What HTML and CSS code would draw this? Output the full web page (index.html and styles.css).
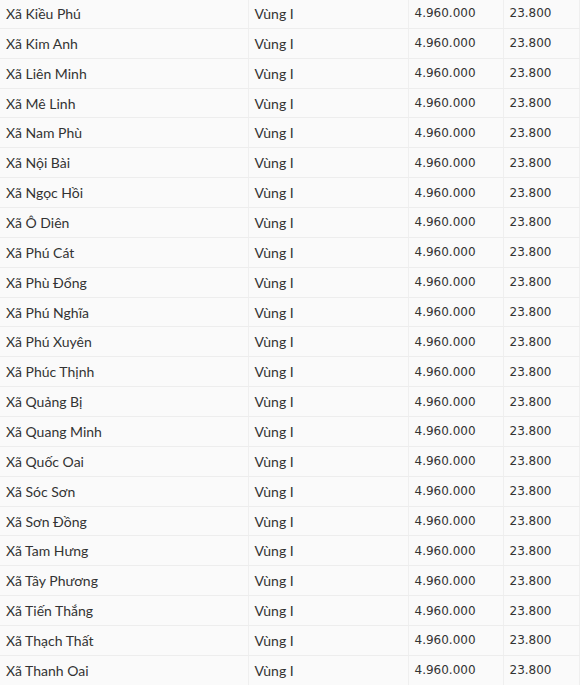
FILE: index.html
```html
<!DOCTYPE html>
<html lang="vi">
<head>
<meta charset="utf-8">
<link rel="stylesheet" href="styles.css">
</head>
<body>
<table class="rates">
<colgroup><col class="c-name"><col class="c-zone"><col class="c-month"><col class="c-hour"></colgroup>
<tbody>
<tr><td class="name">Xã Kiều Phú</td><td class="zone">Vùng I</td><td class="num">4.960.000</td><td class="num">23.800</td></tr>
<tr><td class="name">Xã Kim Anh</td><td class="zone">Vùng I</td><td class="num">4.960.000</td><td class="num">23.800</td></tr>
<tr><td class="name">Xã Liên Minh</td><td class="zone">Vùng I</td><td class="num">4.960.000</td><td class="num">23.800</td></tr>
<tr><td class="name">Xã Mê Linh</td><td class="zone">Vùng I</td><td class="num">4.960.000</td><td class="num">23.800</td></tr>
<tr><td class="name">Xã Nam Phù</td><td class="zone">Vùng I</td><td class="num">4.960.000</td><td class="num">23.800</td></tr>
<tr><td class="name">Xã Nội Bài</td><td class="zone">Vùng I</td><td class="num">4.960.000</td><td class="num">23.800</td></tr>
<tr><td class="name">Xã Ngọc Hồi</td><td class="zone">Vùng I</td><td class="num">4.960.000</td><td class="num">23.800</td></tr>
<tr><td class="name">Xã Ô Diên</td><td class="zone">Vùng I</td><td class="num">4.960.000</td><td class="num">23.800</td></tr>
<tr><td class="name">Xã Phú Cát</td><td class="zone">Vùng I</td><td class="num">4.960.000</td><td class="num">23.800</td></tr>
<tr><td class="name">Xã Phù Đổng</td><td class="zone">Vùng I</td><td class="num">4.960.000</td><td class="num">23.800</td></tr>
<tr><td class="name">Xã Phú Nghĩa</td><td class="zone">Vùng I</td><td class="num">4.960.000</td><td class="num">23.800</td></tr>
<tr><td class="name">Xã Phú Xuyên</td><td class="zone">Vùng I</td><td class="num">4.960.000</td><td class="num">23.800</td></tr>
<tr><td class="name">Xã Phúc Thịnh</td><td class="zone">Vùng I</td><td class="num">4.960.000</td><td class="num">23.800</td></tr>
<tr><td class="name">Xã Quảng Bị</td><td class="zone">Vùng I</td><td class="num">4.960.000</td><td class="num">23.800</td></tr>
<tr><td class="name">Xã Quang Minh</td><td class="zone">Vùng I</td><td class="num">4.960.000</td><td class="num">23.800</td></tr>
<tr><td class="name">Xã Quốc Oai</td><td class="zone">Vùng I</td><td class="num">4.960.000</td><td class="num">23.800</td></tr>
<tr><td class="name">Xã Sóc Sơn</td><td class="zone">Vùng I</td><td class="num">4.960.000</td><td class="num">23.800</td></tr>
<tr><td class="name">Xã Sơn Đồng</td><td class="zone">Vùng I</td><td class="num">4.960.000</td><td class="num">23.800</td></tr>
<tr><td class="name">Xã Tam Hưng</td><td class="zone">Vùng I</td><td class="num">4.960.000</td><td class="num">23.800</td></tr>
<tr><td class="name">Xã Tây Phương</td><td class="zone">Vùng I</td><td class="num">4.960.000</td><td class="num">23.800</td></tr>
<tr><td class="name">Xã Tiến Thắng</td><td class="zone">Vùng I</td><td class="num">4.960.000</td><td class="num">23.800</td></tr>
<tr><td class="name">Xã Thạch Thất</td><td class="zone">Vùng I</td><td class="num">4.960.000</td><td class="num">23.800</td></tr>
<tr><td class="name">Xã Thanh Oai</td><td class="zone">Vùng I</td><td class="num">4.960.000</td><td class="num">23.800</td></tr>
</tbody>
</table>
</body>
</html>
```
FILE: styles.css
```css
html, body {
  margin: 0;
  padding: 0;
  background: #fafafa;
}
.rates {
  border-collapse: collapse;
  table-layout: fixed;
  width: 579px;
  margin-top: -2px;
  color: #333333;
}
.c-name { width: 248px; }
.c-zone { width: 160px; }
.c-month { width: 95px; }
.c-hour { width: 76px; }
.rates td {
  height: 28.86px;
  padding: 0 6px;
  border-top: 1px solid #ededed;
  border-bottom: 1px solid #ededed;
  border-right: 1px solid #efefef;
  white-space: nowrap;
  vertical-align: middle;
}
.name, .zone {
  font-family: Lato, "Noto Sans", sans-serif;
  font-size: 14px;
}
.num {
  font-family: "DejaVu Sans", sans-serif;
  font-size: 12px;
  padding-left: 7px;
}
```
